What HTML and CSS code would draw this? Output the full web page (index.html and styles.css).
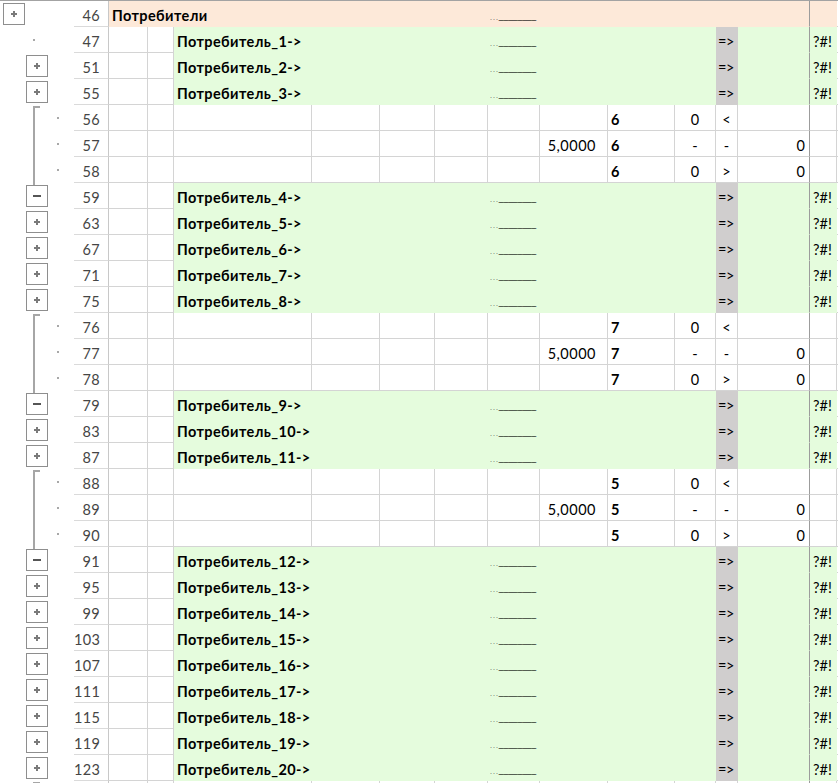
FILE: index.html
```html
<!DOCTYPE html>
<html lang="ru">
<head>
<meta charset="utf-8">
<title>Потребители</title>
<link rel="stylesheet" href="styles.css">
</head>
<body>
<div class="sheet">

<div class="row">
  <div class="ol"><div class="btn l1"><svg width="6" height="6" viewBox="0 0 6 6"><path d="M0 2h6v2H0zM2 0h2v6H2z" fill="#7a7a7a"/></svg></div></div>
  <div class="rh">46</div>
  <div class="c p b s3">Потребители</div>
  <div class="c p"></div><div class="c p"></div><div class="c p"></div>
  <div class="c p ph"><span class="dt">...</span><span class="us">________</span></div>
  <div class="c p"></div><div class="c p"></div><div class="c p"></div><div class="c p"></div>
  <div class="c p lc"></div><div class="c p"></div><div class="c"></div>
</div>

<div class="row">
  <div class="ol"><div class="dot l2"></div></div>
  <div class="rh">47</div>
  <div class="c"></div><div class="c"></div>
  <div class="c g b">Потребитель_1-&gt;</div>
  <div class="c g"></div><div class="c g"></div><div class="c g"></div>
  <div class="c g ph"><span class="dt">...</span><span class="us">________</span></div>
  <div class="c g"></div><div class="c g"></div><div class="c g"></div>
  <div class="c k">=&gt;</div><div class="c g lc"></div><div class="c g">?#!</div><div class="c"></div>
</div>

<div class="row">
  <div class="ol"><div class="btn l2"><svg width="6" height="6" viewBox="0 0 6 6"><path d="M0 2h6v2H0zM2 0h2v6H2z" fill="#7a7a7a"/></svg></div></div>
  <div class="rh">51</div>
  <div class="c"></div><div class="c"></div>
  <div class="c g b">Потребитель_2-&gt;</div>
  <div class="c g"></div><div class="c g"></div><div class="c g"></div>
  <div class="c g ph"><span class="dt">...</span><span class="us">________</span></div>
  <div class="c g"></div><div class="c g"></div><div class="c g"></div>
  <div class="c k">=&gt;</div><div class="c g lc"></div><div class="c g">?#!</div><div class="c"></div>
</div>

<div class="row">
  <div class="ol"><div class="btn l2"><svg width="6" height="6" viewBox="0 0 6 6"><path d="M0 2h6v2H0zM2 0h2v6H2z" fill="#7a7a7a"/></svg></div></div>
  <div class="rh">55</div>
  <div class="c"></div><div class="c"></div>
  <div class="c g b">Потребитель_3-&gt;</div>
  <div class="c g"></div><div class="c g"></div><div class="c g"></div>
  <div class="c g ph"><span class="dt">...</span><span class="us">________</span></div>
  <div class="c g"></div><div class="c g"></div><div class="c g"></div>
  <div class="c k">=&gt;</div><div class="c g lc"></div><div class="c g">?#!</div><div class="c"></div>
</div>

<div class="row">
  <div class="ol"><div class="bs"></div><div class="dot l3"></div></div>
  <div class="rh">56</div>
  <div class="c"></div><div class="c"></div><div class="c"></div><div class="c"></div><div class="c"></div><div class="c"></div><div class="c"></div>
  <div class="c r"></div><div class="c b">6</div><div class="c ctr">0</div><div class="c ctr">&lt;</div><div class="c r lc"></div><div class="c"></div><div class="c"></div>
</div>

<div class="row">
  <div class="ol"><div class="bm"></div><div class="dot l3"></div></div>
  <div class="rh">57</div>
  <div class="c"></div><div class="c"></div><div class="c"></div><div class="c"></div><div class="c"></div><div class="c"></div><div class="c"></div>
  <div class="c r num">5,0000</div><div class="c b">6</div><div class="c ctr">-</div><div class="c ctr">-</div><div class="c r lc">0</div><div class="c"></div><div class="c"></div>
</div>

<div class="row">
  <div class="ol"><div class="bm"></div><div class="dot l3"></div></div>
  <div class="rh">58</div>
  <div class="c"></div><div class="c"></div><div class="c"></div><div class="c"></div><div class="c"></div><div class="c"></div><div class="c"></div>
  <div class="c r"></div><div class="c b">6</div><div class="c ctr">0</div><div class="c ctr">&gt;</div><div class="c r lc">0</div><div class="c"></div><div class="c"></div>
</div>

<div class="row">
  <div class="ol"><div class="be"></div><div class="btn l2"><svg width="8" height="2" viewBox="0 0 8 2"><rect width="8" height="2" fill="#555"/></svg></div></div>
  <div class="rh">59</div>
  <div class="c"></div><div class="c"></div>
  <div class="c g b">Потребитель_4-&gt;</div>
  <div class="c g"></div><div class="c g"></div><div class="c g"></div>
  <div class="c g ph"><span class="dt">...</span><span class="us">________</span></div>
  <div class="c g"></div><div class="c g"></div><div class="c g"></div>
  <div class="c k">=&gt;</div><div class="c g lc"></div><div class="c g">?#!</div><div class="c"></div>
</div>

<div class="row">
  <div class="ol"><div class="btn l2"><svg width="6" height="6" viewBox="0 0 6 6"><path d="M0 2h6v2H0zM2 0h2v6H2z" fill="#7a7a7a"/></svg></div></div>
  <div class="rh">63</div>
  <div class="c"></div><div class="c"></div>
  <div class="c g b">Потребитель_5-&gt;</div>
  <div class="c g"></div><div class="c g"></div><div class="c g"></div>
  <div class="c g ph"><span class="dt">...</span><span class="us">________</span></div>
  <div class="c g"></div><div class="c g"></div><div class="c g"></div>
  <div class="c k">=&gt;</div><div class="c g lc"></div><div class="c g">?#!</div><div class="c"></div>
</div>

<div class="row">
  <div class="ol"><div class="btn l2"><svg width="6" height="6" viewBox="0 0 6 6"><path d="M0 2h6v2H0zM2 0h2v6H2z" fill="#7a7a7a"/></svg></div></div>
  <div class="rh">67</div>
  <div class="c"></div><div class="c"></div>
  <div class="c g b">Потребитель_6-&gt;</div>
  <div class="c g"></div><div class="c g"></div><div class="c g"></div>
  <div class="c g ph"><span class="dt">...</span><span class="us">________</span></div>
  <div class="c g"></div><div class="c g"></div><div class="c g"></div>
  <div class="c k">=&gt;</div><div class="c g lc"></div><div class="c g">?#!</div><div class="c"></div>
</div>

<div class="row">
  <div class="ol"><div class="btn l2"><svg width="6" height="6" viewBox="0 0 6 6"><path d="M0 2h6v2H0zM2 0h2v6H2z" fill="#7a7a7a"/></svg></div></div>
  <div class="rh">71</div>
  <div class="c"></div><div class="c"></div>
  <div class="c g b">Потребитель_7-&gt;</div>
  <div class="c g"></div><div class="c g"></div><div class="c g"></div>
  <div class="c g ph"><span class="dt">...</span><span class="us">________</span></div>
  <div class="c g"></div><div class="c g"></div><div class="c g"></div>
  <div class="c k">=&gt;</div><div class="c g lc"></div><div class="c g">?#!</div><div class="c"></div>
</div>

<div class="row">
  <div class="ol"><div class="btn l2"><svg width="6" height="6" viewBox="0 0 6 6"><path d="M0 2h6v2H0zM2 0h2v6H2z" fill="#7a7a7a"/></svg></div></div>
  <div class="rh">75</div>
  <div class="c"></div><div class="c"></div>
  <div class="c g b">Потребитель_8-&gt;</div>
  <div class="c g"></div><div class="c g"></div><div class="c g"></div>
  <div class="c g ph"><span class="dt">...</span><span class="us">________</span></div>
  <div class="c g"></div><div class="c g"></div><div class="c g"></div>
  <div class="c k">=&gt;</div><div class="c g lc"></div><div class="c g">?#!</div><div class="c"></div>
</div>

<div class="row">
  <div class="ol"><div class="bs"></div><div class="dot l3"></div></div>
  <div class="rh">76</div>
  <div class="c"></div><div class="c"></div><div class="c"></div><div class="c"></div><div class="c"></div><div class="c"></div><div class="c"></div>
  <div class="c r"></div><div class="c b">7</div><div class="c ctr">0</div><div class="c ctr">&lt;</div><div class="c r lc"></div><div class="c"></div><div class="c"></div>
</div>

<div class="row">
  <div class="ol"><div class="bm"></div><div class="dot l3"></div></div>
  <div class="rh">77</div>
  <div class="c"></div><div class="c"></div><div class="c"></div><div class="c"></div><div class="c"></div><div class="c"></div><div class="c"></div>
  <div class="c r num">5,0000</div><div class="c b">7</div><div class="c ctr">-</div><div class="c ctr">-</div><div class="c r lc">0</div><div class="c"></div><div class="c"></div>
</div>

<div class="row">
  <div class="ol"><div class="bm"></div><div class="dot l3"></div></div>
  <div class="rh">78</div>
  <div class="c"></div><div class="c"></div><div class="c"></div><div class="c"></div><div class="c"></div><div class="c"></div><div class="c"></div>
  <div class="c r"></div><div class="c b">7</div><div class="c ctr">0</div><div class="c ctr">&gt;</div><div class="c r lc">0</div><div class="c"></div><div class="c"></div>
</div>

<div class="row">
  <div class="ol"><div class="be"></div><div class="btn l2"><svg width="8" height="2" viewBox="0 0 8 2"><rect width="8" height="2" fill="#555"/></svg></div></div>
  <div class="rh">79</div>
  <div class="c"></div><div class="c"></div>
  <div class="c g b">Потребитель_9-&gt;</div>
  <div class="c g"></div><div class="c g"></div><div class="c g"></div>
  <div class="c g ph"><span class="dt">...</span><span class="us">________</span></div>
  <div class="c g"></div><div class="c g"></div><div class="c g"></div>
  <div class="c k">=&gt;</div><div class="c g lc"></div><div class="c g">?#!</div><div class="c"></div>
</div>

<div class="row">
  <div class="ol"><div class="btn l2"><svg width="6" height="6" viewBox="0 0 6 6"><path d="M0 2h6v2H0zM2 0h2v6H2z" fill="#7a7a7a"/></svg></div></div>
  <div class="rh">83</div>
  <div class="c"></div><div class="c"></div>
  <div class="c g b">Потребитель_10-&gt;</div>
  <div class="c g"></div><div class="c g"></div><div class="c g"></div>
  <div class="c g ph"><span class="dt">...</span><span class="us">________</span></div>
  <div class="c g"></div><div class="c g"></div><div class="c g"></div>
  <div class="c k">=&gt;</div><div class="c g lc"></div><div class="c g">?#!</div><div class="c"></div>
</div>

<div class="row">
  <div class="ol"><div class="btn l2"><svg width="6" height="6" viewBox="0 0 6 6"><path d="M0 2h6v2H0zM2 0h2v6H2z" fill="#7a7a7a"/></svg></div></div>
  <div class="rh">87</div>
  <div class="c"></div><div class="c"></div>
  <div class="c g b">Потребитель_11-&gt;</div>
  <div class="c g"></div><div class="c g"></div><div class="c g"></div>
  <div class="c g ph"><span class="dt">...</span><span class="us">________</span></div>
  <div class="c g"></div><div class="c g"></div><div class="c g"></div>
  <div class="c k">=&gt;</div><div class="c g lc"></div><div class="c g">?#!</div><div class="c"></div>
</div>

<div class="row">
  <div class="ol"><div class="bs"></div><div class="dot l3"></div></div>
  <div class="rh">88</div>
  <div class="c"></div><div class="c"></div><div class="c"></div><div class="c"></div><div class="c"></div><div class="c"></div><div class="c"></div>
  <div class="c r"></div><div class="c b">5</div><div class="c ctr">0</div><div class="c ctr">&lt;</div><div class="c r lc"></div><div class="c"></div><div class="c"></div>
</div>

<div class="row">
  <div class="ol"><div class="bm"></div><div class="dot l3"></div></div>
  <div class="rh">89</div>
  <div class="c"></div><div class="c"></div><div class="c"></div><div class="c"></div><div class="c"></div><div class="c"></div><div class="c"></div>
  <div class="c r num">5,0000</div><div class="c b">5</div><div class="c ctr">-</div><div class="c ctr">-</div><div class="c r lc">0</div><div class="c"></div><div class="c"></div>
</div>

<div class="row">
  <div class="ol"><div class="bm"></div><div class="dot l3"></div></div>
  <div class="rh">90</div>
  <div class="c"></div><div class="c"></div><div class="c"></div><div class="c"></div><div class="c"></div><div class="c"></div><div class="c"></div>
  <div class="c r"></div><div class="c b">5</div><div class="c ctr">0</div><div class="c ctr">&gt;</div><div class="c r lc">0</div><div class="c"></div><div class="c"></div>
</div>

<div class="row">
  <div class="ol"><div class="be"></div><div class="btn l2"><svg width="8" height="2" viewBox="0 0 8 2"><rect width="8" height="2" fill="#555"/></svg></div></div>
  <div class="rh">91</div>
  <div class="c"></div><div class="c"></div>
  <div class="c g b">Потребитель_12-&gt;</div>
  <div class="c g"></div><div class="c g"></div><div class="c g"></div>
  <div class="c g ph"><span class="dt">...</span><span class="us">________</span></div>
  <div class="c g"></div><div class="c g"></div><div class="c g"></div>
  <div class="c k">=&gt;</div><div class="c g lc"></div><div class="c g">?#!</div><div class="c"></div>
</div>

<div class="row">
  <div class="ol"><div class="btn l2"><svg width="6" height="6" viewBox="0 0 6 6"><path d="M0 2h6v2H0zM2 0h2v6H2z" fill="#7a7a7a"/></svg></div></div>
  <div class="rh">95</div>
  <div class="c"></div><div class="c"></div>
  <div class="c g b">Потребитель_13-&gt;</div>
  <div class="c g"></div><div class="c g"></div><div class="c g"></div>
  <div class="c g ph"><span class="dt">...</span><span class="us">________</span></div>
  <div class="c g"></div><div class="c g"></div><div class="c g"></div>
  <div class="c k">=&gt;</div><div class="c g lc"></div><div class="c g">?#!</div><div class="c"></div>
</div>

<div class="row">
  <div class="ol"><div class="btn l2"><svg width="6" height="6" viewBox="0 0 6 6"><path d="M0 2h6v2H0zM2 0h2v6H2z" fill="#7a7a7a"/></svg></div></div>
  <div class="rh">99</div>
  <div class="c"></div><div class="c"></div>
  <div class="c g b">Потребитель_14-&gt;</div>
  <div class="c g"></div><div class="c g"></div><div class="c g"></div>
  <div class="c g ph"><span class="dt">...</span><span class="us">________</span></div>
  <div class="c g"></div><div class="c g"></div><div class="c g"></div>
  <div class="c k">=&gt;</div><div class="c g lc"></div><div class="c g">?#!</div><div class="c"></div>
</div>

<div class="row">
  <div class="ol"><div class="btn l2"><svg width="6" height="6" viewBox="0 0 6 6"><path d="M0 2h6v2H0zM2 0h2v6H2z" fill="#7a7a7a"/></svg></div></div>
  <div class="rh">103</div>
  <div class="c"></div><div class="c"></div>
  <div class="c g b">Потребитель_15-&gt;</div>
  <div class="c g"></div><div class="c g"></div><div class="c g"></div>
  <div class="c g ph"><span class="dt">...</span><span class="us">________</span></div>
  <div class="c g"></div><div class="c g"></div><div class="c g"></div>
  <div class="c k">=&gt;</div><div class="c g lc"></div><div class="c g">?#!</div><div class="c"></div>
</div>

<div class="row">
  <div class="ol"><div class="btn l2"><svg width="6" height="6" viewBox="0 0 6 6"><path d="M0 2h6v2H0zM2 0h2v6H2z" fill="#7a7a7a"/></svg></div></div>
  <div class="rh">107</div>
  <div class="c"></div><div class="c"></div>
  <div class="c g b">Потребитель_16-&gt;</div>
  <div class="c g"></div><div class="c g"></div><div class="c g"></div>
  <div class="c g ph"><span class="dt">...</span><span class="us">________</span></div>
  <div class="c g"></div><div class="c g"></div><div class="c g"></div>
  <div class="c k">=&gt;</div><div class="c g lc"></div><div class="c g">?#!</div><div class="c"></div>
</div>

<div class="row">
  <div class="ol"><div class="btn l2"><svg width="6" height="6" viewBox="0 0 6 6"><path d="M0 2h6v2H0zM2 0h2v6H2z" fill="#7a7a7a"/></svg></div></div>
  <div class="rh">111</div>
  <div class="c"></div><div class="c"></div>
  <div class="c g b">Потребитель_17-&gt;</div>
  <div class="c g"></div><div class="c g"></div><div class="c g"></div>
  <div class="c g ph"><span class="dt">...</span><span class="us">________</span></div>
  <div class="c g"></div><div class="c g"></div><div class="c g"></div>
  <div class="c k">=&gt;</div><div class="c g lc"></div><div class="c g">?#!</div><div class="c"></div>
</div>

<div class="row">
  <div class="ol"><div class="btn l2"><svg width="6" height="6" viewBox="0 0 6 6"><path d="M0 2h6v2H0zM2 0h2v6H2z" fill="#7a7a7a"/></svg></div></div>
  <div class="rh">115</div>
  <div class="c"></div><div class="c"></div>
  <div class="c g b">Потребитель_18-&gt;</div>
  <div class="c g"></div><div class="c g"></div><div class="c g"></div>
  <div class="c g ph"><span class="dt">...</span><span class="us">________</span></div>
  <div class="c g"></div><div class="c g"></div><div class="c g"></div>
  <div class="c k">=&gt;</div><div class="c g lc"></div><div class="c g">?#!</div><div class="c"></div>
</div>

<div class="row">
  <div class="ol"><div class="btn l2"><svg width="6" height="6" viewBox="0 0 6 6"><path d="M0 2h6v2H0zM2 0h2v6H2z" fill="#7a7a7a"/></svg></div></div>
  <div class="rh">119</div>
  <div class="c"></div><div class="c"></div>
  <div class="c g b">Потребитель_19-&gt;</div>
  <div class="c g"></div><div class="c g"></div><div class="c g"></div>
  <div class="c g ph"><span class="dt">...</span><span class="us">________</span></div>
  <div class="c g"></div><div class="c g"></div><div class="c g"></div>
  <div class="c k">=&gt;</div><div class="c g lc"></div><div class="c g">?#!</div><div class="c"></div>
</div>

<div class="row">
  <div class="ol"><div class="btn l2"><svg width="6" height="6" viewBox="0 0 6 6"><path d="M0 2h6v2H0zM2 0h2v6H2z" fill="#7a7a7a"/></svg></div></div>
  <div class="rh">123</div>
  <div class="c"></div><div class="c"></div>
  <div class="c g b">Потребитель_20-&gt;</div>
  <div class="c g"></div><div class="c g"></div><div class="c g"></div>
  <div class="c g ph"><span class="dt">...</span><span class="us">________</span></div>
  <div class="c g"></div><div class="c g"></div><div class="c g"></div>
  <div class="c k">=&gt;</div><div class="c g lc"></div><div class="c g">?#!</div><div class="c"></div>
</div>

<div class="row">
  <div class="ol"><div class="bs"></div></div>
  <div class="rh"></div>
  <div class="c"></div><div class="c"></div><div class="c"></div><div class="c"></div><div class="c"></div><div class="c"></div><div class="c"></div>
  <div class="c"></div><div class="c"></div><div class="c"></div><div class="c"></div><div class="c lc"></div><div class="c"></div><div class="c"></div>
</div>

</div>
</body>
</html>
```

FILE: styles.css
```css
html, body {
  margin: 0;
  padding: 0;
  background: #ffffff;
}
body {
  height: 783px;
  overflow: hidden;
  font-family: Lato, "Open Sans", "Liberation Sans", sans-serif;
  font-size: 14.5px;
  color: #000;
}
.sheet {
  border-top: 1px solid #a3a3a3;
}
.row {
  display: grid;
  grid-template-columns: 74px 35px 39px 26px 138px 68px 55px 53px 52px 68px 67px 41px 22px 72px 27px 1fr;
  height: 26px;
}
.c {
  box-sizing: border-box;
  height: 26px;
  border-right: 1px solid #d4d4d4;
  border-bottom: 1px solid #d4d4d4;
  padding: 5px 3px 0 3px;
  line-height: 20px;
  white-space: nowrap;
  overflow: hidden;
}
.s3 { grid-column: span 3; }
.b { font-weight: 700; letter-spacing: 0.4px; }
.r { text-align: right; padding-right: 4px; }
.num { padding-right: 11px; letter-spacing: 0.5px; }
.ctr { text-align: center; padding-left: 0; padding-right: 0; }
.g {
  background: #e5fcdd;
  border-color: transparent;
}
.p {
  background: #fde9d9;
  border-color: transparent;
}
.k {
  background: #d0cece;
  border-color: transparent;
  padding-left: 2px;
  letter-spacing: -0.5px;
}
.lc { border-right-color: #9c9c9c; }

/* outline gutter */
.ol {
  display: grid;
  grid-template-columns: 3px 23px 23px 25px;
  grid-template-rows: 26px;
}
.ol > * {
  grid-row: 1;
  align-self: start;
  justify-self: start;
}
.l1 { grid-column: 2; }
.l2 { grid-column: 3; }
.l3 { grid-column: 4; }
.btn {
  box-sizing: border-box;
  width: 22px;
  height: 22px;
  margin-top: 2px;
  border: 1px solid #8e8e8e;
  background: #fff;
  display: flex;
  align-items: center;
  justify-content: center;
}
.btn svg { display: block; }
.dot {
  width: 2px;
  height: 2px;
  margin-top: 12px;
  background: #a8a8a8;
}
.dot.l2 { margin-left: 7px; }
.dot.l3 { margin-left: 8px; }
.bs {
  grid-column: 3;
  box-sizing: border-box;
  margin-left: 7px;
  margin-top: 1px;
  width: 7px;
  height: 25px;
  border-left: 2px solid #a6a6a6;
  border-top: 2px solid #a6a6a6;
}
.bm {
  grid-column: 3;
  margin-left: 7px;
  width: 2px;
  height: 26px;
  background: #a6a6a6;
}
.be {
  grid-column: 3;
  margin-left: 7px;
  width: 2px;
  height: 3px;
  background: #a6a6a6;
}

/* row header */
.rh {
  box-sizing: border-box;
  height: 26px;
  border-right: 1px solid #c8c8c8;
  border-bottom: 1px solid #dadada;
  text-align: right;
  padding: 5px 8px 0 0;
  line-height: 20px;
  color: #454545;
  letter-spacing: 0.3px;
}

/* placeholder dots + line */
.ph { padding-left: 2px; }
.dt {
  font-family: "Liberation Sans", sans-serif;
  font-size: 7px;
  letter-spacing: 1px;
  color: #444;
  vertical-align: 2px;
}
.us {
  font-family: "Liberation Sans", sans-serif;
  font-size: 8.4px;
  vertical-align: 3px;
}
```
